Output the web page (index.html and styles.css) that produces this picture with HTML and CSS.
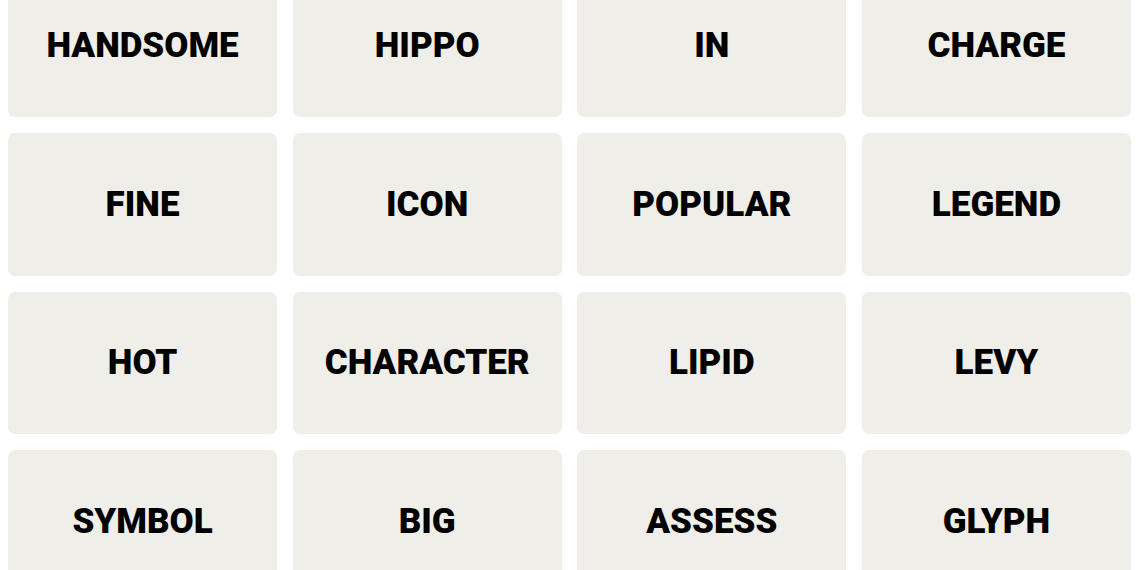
FILE: index.html
```html
<!DOCTYPE html>
<html>
<head>
<meta charset="utf-8">
<link rel="stylesheet" href="styles.css">
</head>
<body>
<div class="board">
  <div class="tile">HANDSOME</div>
  <div class="tile">HIPPO</div>
  <div class="tile">IN</div>
  <div class="tile">CHARGE</div>
  <div class="tile">FINE</div>
  <div class="tile">ICON</div>
  <div class="tile">POPULAR</div>
  <div class="tile">LEGEND</div>
  <div class="tile">HOT</div>
  <div class="tile">CHARACTER</div>
  <div class="tile">LIPID</div>
  <div class="tile">LEVY</div>
  <div class="tile">SYMBOL</div>
  <div class="tile">BIG</div>
  <div class="tile">ASSESS</div>
  <div class="tile">GLYPH</div>
</div>
</body>
</html>
```
FILE: styles.css
```css
html, body {
  margin: 0;
  padding: 0;
  background: #ffffff;
  overflow: hidden;
}
.board {
  display: grid;
  grid-template-columns: repeat(4, 1fr);
  grid-auto-rows: 142.5px;
  column-gap: 15.5px;
  row-gap: 16px;
  margin-top: -25.5px;
  padding: 0 9px 0 8px;
}
.tile {
  background: #efeee9;
  border-radius: 7px;
  display: flex;
  align-items: center;
  justify-content: center;
  font-family: Roboto, "Liberation Sans", Arial, sans-serif;
  font-weight: 900;
  font-size: 35px;
  color: #000;
  text-transform: uppercase;
}
```
